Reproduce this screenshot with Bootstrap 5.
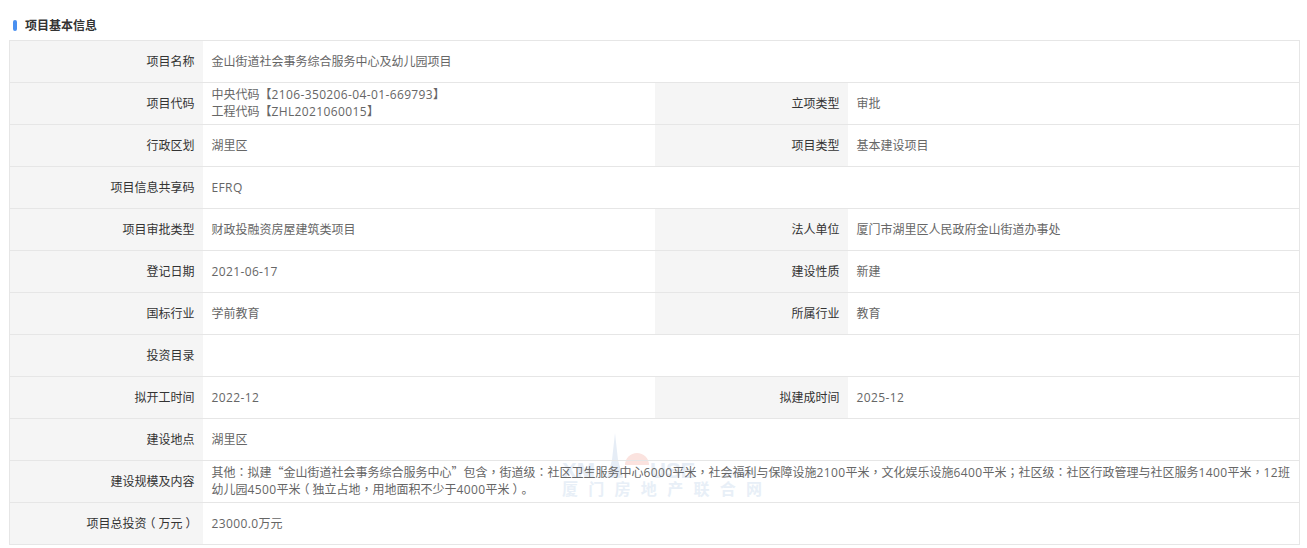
<!DOCTYPE html>
<html lang="zh-CN">
<head>
<meta charset="utf-8">
<title>项目基本信息</title>
<link href="https://cdn.jsdelivr.net/npm/bootstrap@5.3.0/dist/css/bootstrap.min.css" rel="stylesheet">
<style>
html,body{height:100%;overflow:hidden;background:#fff}
body{font-family:"Noto Sans CJK SC",sans-serif;font-size:12px;line-height:16px;color:#666;padding:0 7px 0 9px}
.sec-head{height:40px;padding:10px 0 0 4px;font-size:12px;font-weight:700;color:#333;line-height:16px}
.sec-mark{width:4px;height:11px;border-radius:2px;background:#4a90f0;margin-right:8px}
.info-wrap{position:relative}
.info-table{table-layout:fixed;width:1291px;margin:0;border-collapse:collapse;--bs-table-color:#666;--bs-table-border-color:#e6e6e6}
.info-table td,.info-table th{height:42px;padding:0 8px 1px;border-width:1px 0;border-style:solid;border-color:#e6e6e6;vertical-align:middle;font-size:12px;line-height:16px;font-weight:400}
.info-table tr>:first-child{border-left-width:1px}
.info-table tr>:last-child{border-right-width:1px}
.info-table th{background:#f5f5f5;color:#333;text-align:right;--bs-table-bg:#f5f5f5}
.info-table td{word-break:break-all;padding-left:9px}
.c-l{width:193px}.c-v{width:452px}.c-l2{width:193px}
.ltn{font-family:"Open Sans",sans-serif;letter-spacing:.37px}
.pn{font-family:"Noto Sans CJK TC",sans-serif}
.pa,.pb{display:inline-block}
.pa{transform:translateX(-3px)}
.pb{transform:translateX(3px)}
.wm{position:absolute;left:547px;top:390px;width:230px;height:80px;pointer-events:none}
.wm-en{font:700 22px "Liberation Sans",sans-serif;fill:#e6edf6}
.wm-cm{font:700 15px "Liberation Sans",sans-serif;fill:#e6edf6}
.wm-cn{font:700 16px "Noto Sans CJK SC",sans-serif;fill:#e8eff7}
</style>
</head>
<body>
<div class="sec-head d-flex align-items-center"><span class="sec-mark d-inline-block"></span><span>项目基本信息</span></div>
<div class="info-wrap">
<svg class="wm" viewBox="0 0 230 80" aria-hidden="true">
<path d="M59 3 L62 30 L67 48 H51 L56 30Z" fill="#e6edf6"/>
<path d="M69 35a12 12 0 0 1 24 0Z" fill="#fbe3df"/>
<text class="wm-en" x="6" y="48">XM</text><text class="wm-en" x="94" y="48">USE</text><text class="wm-cm" x="164" y="48">.com</text>
<text class="wm-cn" x="6" y="65" textLength="200" lengthAdjust="spacing">厦门房地产联合网</text>
</svg>
<table class="table info-table position-relative bg-transparent">
<colgroup><col class="c-l"><col class="c-v"><col class="c-l2"><col></colgroup>
<tbody>
<tr><th>项目名称</th><td colspan="3">金山街道社会事务综合服务中心及幼儿园项目</td></tr>
<tr><th>项目代码</th><td>中央代码【<span class="ltn">2106-350206-04-01-669793</span>】<br>工程代码【<span class="ltn">ZHL2021060015</span>】</td><th>立项类型</th><td>审批</td></tr>
<tr><th>行政区划</th><td>湖里区</td><th>项目类型</th><td>基本建设项目</td></tr>
<tr><th>项目信息共享码</th><td colspan="3"><span class="ltn">EFRQ</span></td></tr>
<tr><th>项目审批类型</th><td>财政投融资房屋建筑类项目</td><th>法人单位</th><td>厦门市湖里区人民政府金山街道办事处</td></tr>
<tr><th>登记日期</th><td><span class="ltn">2021-06-17</span></td><th>建设性质</th><td>新建</td></tr>
<tr><th>国标行业</th><td>学前教育</td><th>所属行业</th><td>教育</td></tr>
<tr><th>投资目录</th><td colspan="3"></td></tr>
<tr><th>拟开工时间</th><td><span class="ltn">2022-12</span></td><th>拟建成时间</th><td><span class="ltn">2025-12</span></td></tr>
<tr><th>建设地点</th><td colspan="3">湖里区</td></tr>
<tr><th>建设规模及内容</th><td colspan="3">其他<span class="pn" lang="zh-TW">：</span>拟建“金山街道社会事务综合服务中心”包含<span class="pn" lang="zh-TW">，</span>街道级<span class="pn" lang="zh-TW">：</span>社区卫生服务中心<span class="ltn">6000</span>平米<span class="pn" lang="zh-TW">，</span>社会福利与保障设施<span class="ltn">2100</span>平米<span class="pn" lang="zh-TW">，</span>文化娱乐设施<span class="ltn">6400</span>平米<span class="pn" lang="zh-TW">；</span>社区级<span class="pn" lang="zh-TW">：</span>社区行政管理与社区服务<span class="ltn">1400</span>平米<span class="pn" lang="zh-TW">，</span><span class="ltn">12</span>班幼儿园<span class="ltn">4500</span>平米<span class="pa">（</span>独立占地<span class="pn" lang="zh-TW">，</span>用地面积不少于<span class="ltn">4000</span>平米<span class="pb">）</span>。</td></tr>
<tr><th>项目总投资<span class="pa">（</span>万元<span class="pb">）</span></th><td colspan="3"><span class="ltn">23000.0</span>万元</td></tr>
</tbody>
</table>
</div>
<script src="https://cdn.jsdelivr.net/npm/bootstrap@5.3.0/dist/js/bootstrap.bundle.min.js"></script>
</body>
</html>
